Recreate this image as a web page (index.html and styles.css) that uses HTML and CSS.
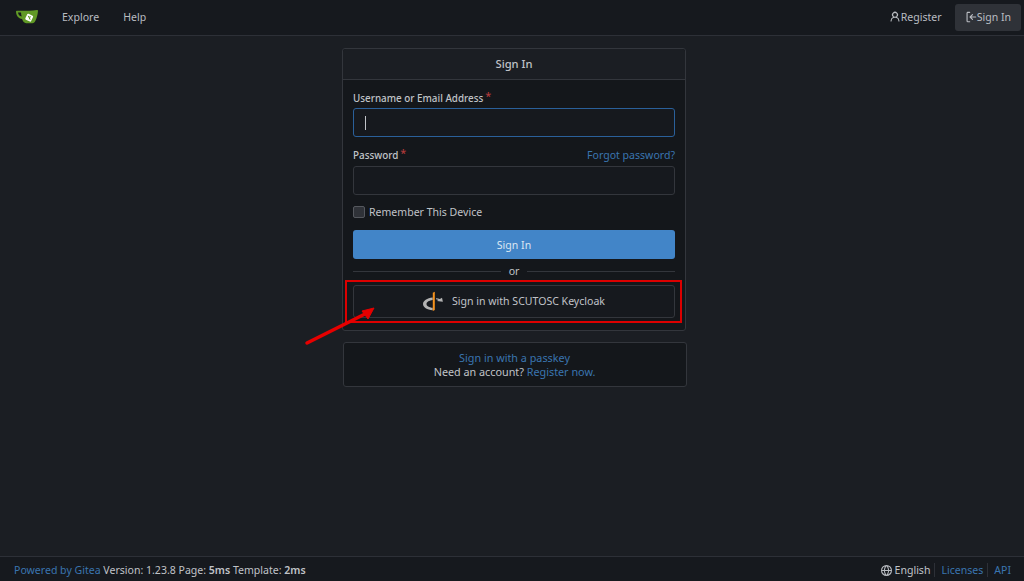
FILE: index.html
```html
<!DOCTYPE html>
<html lang="en">
<head>
  <meta charset="UTF-8">
  <meta name="viewport" content="width=device-width, initial-scale=1.0">
  <title>Sign In</title>
  <link rel="stylesheet" href="styles.css">
</head>
<body>
  <nav class="navbar">
    <div class="nav-left">
      <a class="logo" href="#">
        <svg width="24" height="16" viewBox="0 0 24 16">
          <path fill="#609926" d="M1 2.800c0-.6.4-1 1-1C9 2 15 1.800 22 1c.6 0 1 .4 1 1-.3 3.500-1.300 7.500-2.600 9.800-.6 1.300-1.600 2.400-3 2.400h-6c-1.500 0-2.600-.8-3.400-2.100-.4-.7-.7-1.400-.9-2.100C3.500 9.500 1.200 7 1 2.800z"/>
          <path fill="#14171c" d="M3 3.600h3c.1 1.400.3 2.700.7 4C4.500 7.200 3.300 5.800 3 3.600z"/>
          <rect x="11" y="5.500" width="6.400" height="6.400" rx="1" fill="#fff" transform="rotate(25 14.200 8.700)"/>
          <path fill="none" stroke="#609926" stroke-width="1" d="M13.200 6.800l2 3.800M15.200 7l-.8 3.200"/>
        </svg>
      </a>
      <a class="nav-link" href="#">Explore</a>
      <a class="nav-link" href="#">Help</a>
    </div>
    <div class="nav-right">
      <a class="nav-link nav-icon" href="#">
        <svg width="12" height="12" viewBox="0 0 16 16" fill="#b9bcc1"><path d="M10.500 5a2.500 2.500 0 1 1-5 0 2.500 2.500 0 0 1 5 0zm.061 3.073a4 4 0 1 0-5.123 0 6.004 6.004 0 0 0-3.431 5.142.75.750 0 0 0 1.498.07 4.500 4.500 0 0 1 8.990 0 .75.750 0 1 0 1.498-.07 6.005 6.005 0 0 0-3.432-5.142z"/></svg>
        Register
      </a>
      <a class="nav-link nav-icon active" href="#">
        <svg width="12" height="12" viewBox="0 0 16 16" fill="#b9bcc1"><path d="M2 2.750C2 1.784 2.784 1 3.750 1h2.500a.75.750 0 0 1 0 1.500h-2.500a.25.250 0 0 0-.25.250v10.500c0 .138.112.25.250.25h2.500a.75.750 0 0 1 0 1.500h-2.500A1.750 1.750 0 0 1 2 13.250zm6.560 4.500h5.690a.75.750 0 0 1 0 1.500H8.560l1.970 1.970a.75.750 0 1 1-1.060 1.060L6.220 8.530a.75.750 0 0 1 0-1.060l3.250-3.250a.75.750 0 1 1 1.060 1.060z"/></svg>
        Sign In
      </a>
    </div>
  </nav>

  <main class="page">
    <section class="card">
      <h4 class="card-head">Sign In</h4>
      <form class="card-body">
        <div class="field">
          <label class="label" for="user">Username or Email Address<span class="req">*</span></label>
          <div class="input focus" id="user"><span class="caret"></span></div>
        </div>
        <div class="field">
          <div class="label-row">
            <label class="label" for="pass">Password<span class="req">*</span></label>
            <a class="link" href="#">Forgot password?</a>
          </div>
          <div class="input" id="pass"></div>
        </div>
        <label class="remember"><span class="box"></span>Remember This Device</label>
        <div class="btn primary">Sign In</div>
        <div class="divider"><span>or</span></div>
        <div class="btn oauth">
          <svg width="22" height="20" viewBox="0 0 22 20">
            <path fill="#b3b3b3" d="M9.700 6.600v2.300C6.300 9.300 3.500 10.800 3.500 13c0 2 2.600 3.500 6.200 3.800v2.400C4 18.800 0 16.300 0 13c0-3.200 4-5.800 9.700-6.400z"/>
            <path fill="#f7931e" d="M9.800 1.800l2-1.100v18.200l-2 1.100z"/>
            <path fill="#b3b3b3" d="M13 7.200c1.400 0 2.700.3 3.900.8l2.100-1.300.9 4-6-.8 1.500-1c-.7-.3-1.500-.5-2.400-.6z"/>
          </svg>
          Sign in with SCUTOSC Keycloak
        </div>
      </form>
    </section>
    <section class="card notes">
      <a class="link" href="#">Sign in with a passkey</a>
      <div>Need an account? <a class="link" href="#">Register now.</a></div>
    </section>
  </main>

  <footer class="footer">
    <div><a class="link" href="#">Powered by Gitea</a> Version: 1.23.8 Page: <b>5ms</b> Template: <b>2ms</b></div>
    <div class="footer-right">
      <span class="lang">
        <svg width="11" height="11" viewBox="0 0 16 16" fill="#b9bcc1"><path d="M8 0a8 8 0 1 1 0 16A8 8 0 0 1 8 0zM5.780 8.750a9.640 9.640 0 0 0 1.363 4.177c.255.426.542.832.857 1.215.245-.296.551-.705.857-1.215A9.640 9.640 0 0 0 10.220 8.750zm4.440-1.500a9.640 9.640 0 0 0-1.363-4.177c-.307-.510-.612-.919-.857-1.215a9.927 9.927 0 0 0-.857 1.215A9.640 9.640 0 0 0 5.780 7.250zm-5.944 1.500H1.543a6.507 6.507 0 0 0 4.666 5.500c-.123-.181-.240-.365-.352-.552-.715-1.192-1.437-2.874-1.581-4.948zm-2.733-1.500h2.733c.144-2.074.866-3.756 1.580-4.948.120-.197.237-.381.353-.552a6.507 6.507 0 0 0-4.666 5.500zm10.181 1.500c-.144 2.074-.866 3.756-1.580 4.948-.120.197-.237.381-.353.552a6.507 6.507 0 0 0 4.666-5.500zm2.733-1.500a6.507 6.507 0 0 0-4.666-5.500c.123.181.240.365.353.552.714 1.192 1.436 2.874 1.580 4.948z"/></svg>
        English
      </span>
      <a class="link sep" href="#">Licenses</a>
      <a class="link sep" href="#">API</a>
    </div>
  </footer>

  <div class="mark"></div>
  <svg class="arrow" width="74" height="50" viewBox="0 0 74 50">
    <path d="M3 45L61 16" stroke="#e60000" stroke-width="3.500" stroke-linecap="round"/>
    <path d="M70 10L58 13 64 21z" fill="#e60000" stroke="#e60000" stroke-linejoin="round"/>
  </svg>
</body>
</html>
```

FILE: styles.css
```css
* {
  box-sizing: border-box;
}
html, body {
  height: 100%;
}
body {
  margin: 0;
  display: flex;
  flex-direction: column;
  background: #1b1e23;
  color: #c0c3c8;
  font-family: "Noto Sans", sans-serif;
  font-size: 10.55px;
  line-height: 14px;
}
a {
  text-decoration: none;
}
.navbar {
  height: 36px;
  flex: none;
  display: flex;
  justify-content: space-between;
  align-items: center;
  padding: 0 3px 1px 11px;
  background: #16191e;
  border-bottom: 1px solid #2d3037;
}
.nav-left, .nav-right {
  display: flex;
  align-items: center;
}
.logo {
  display: flex;
  padding: 0 4px;
  margin-right: 7px;
}
.nav-link {
  color: #b9bcc1;
  padding: 0 12px;
  line-height: 27px;
  border-radius: 3px;
}
.nav-icon {
  display: flex;
  align-items: center;
  gap: 0;
}
.nav-right .nav-link {
  padding: 0 13px 0 0;
}
.nav-right .nav-link.active {
  padding: 0 10px;
  background: #2f3238;
}
.page {
  flex: 1;
  display: flex;
  flex-direction: column;
  align-items: center;
  padding: 12px 0 0 4px;
}
.card {
  width: 344px;
  background: #14171b;
  border: 1px solid #33363c;
  border-radius: 3px;
}
.card-head {
  margin: 0;
  height: 31px;
  line-height: 30px;
  text-align: center;
  font-size: 11.2px;
  font-weight: 500;
  background: #1b1e23;
  border-bottom: 1px solid #33363c;
  border-radius: 3px 3px 0 0;
}
.card-body {
  padding: 11px 10px 12px;
}
.field {
  margin-bottom: 11px;
}
.field + .field {
  margin-bottom: 10px;
}
.label {
  display: block;
  margin-bottom: 3px;
  font-size: 9.87px;
  font-weight: 500;
  color: #c0c3c8;
}
.label-row {
  display: flex;
  justify-content: space-between;
  align-items: flex-end;
  margin-bottom: 1px;
}
.label-row .link {
  margin-bottom: 3px;
}
.req {
  color: #b03a3a;
  font-size: 11px;
  margin-left: 2px;
  position: relative;
  top: -2px;
}
.input {
  height: 29px;
  display: flex;
  align-items: center;
  padding-left: 11px;
  background: #16191e;
  border: 1px solid #33363c;
  border-radius: 3px;
}
.input.focus {
  border-color: #2a609a;
}
.caret {
  width: 1px;
  height: 14px;
  background: #c0c3c8;
}
.remember {
  display: flex;
  align-items: center;
  gap: 4px;
  margin-bottom: 11px;
  height: 14px;
}
.box {
  width: 12px;
  height: 12px;
  background: #2f3238;
  border: 1px solid #55585e;
  border-radius: 2px;
}
.btn {
  height: 29px;
  display: flex;
  justify-content: center;
  align-items: center;
  border-radius: 3px;
}
.primary {
  background: #4285c8;
  color: #dbe7f3;
}
.divider {
  display: flex;
  align-items: center;
  gap: 8px;
  height: 24px;
  margin-bottom: 2px;
}
.divider span {
  margin-top: -1px;
}
.divider::before, .divider::after {
  content: "";
  flex: 1;
  height: 1px;
  background: #33363c;
}
.oauth {
  height: 33px;
  gap: 7px;
  padding-bottom: 1px;
  background: #16191e;
  border: 1px solid #33363c;
}
.link {
  color: #3a75b0;
}
.notes {
  height: 45px;
  margin-top: 11px;
  display: flex;
  flex-direction: column;
  justify-content: center;
  align-items: center;
  margin-left: 1px;
  font-size: 10.8px;
}
.footer {
  height: 25px;
  flex: none;
  display: flex;
  justify-content: space-between;
  align-items: center;
  padding: 2px 13px 0 14px;
  background: #16191e;
  border-top: 1px solid #2d3037;
}
.footer b {
  font-weight: 600;
}
.footer-right {
  display: flex;
  align-items: center;
}
.lang {
  display: flex;
  align-items: center;
  gap: 3px;
}
.sep {
  margin-left: 4px;
  padding-left: 6px;
  border-left: 1px solid #2d3037;
}
.mark {
  position: absolute;
  left: 345px;
  top: 280px;
  width: 337px;
  height: 43px;
  border: 2px solid #dc0000;
}
.arrow {
  position: absolute;
  left: 304px;
  top: 298px;
}
```
